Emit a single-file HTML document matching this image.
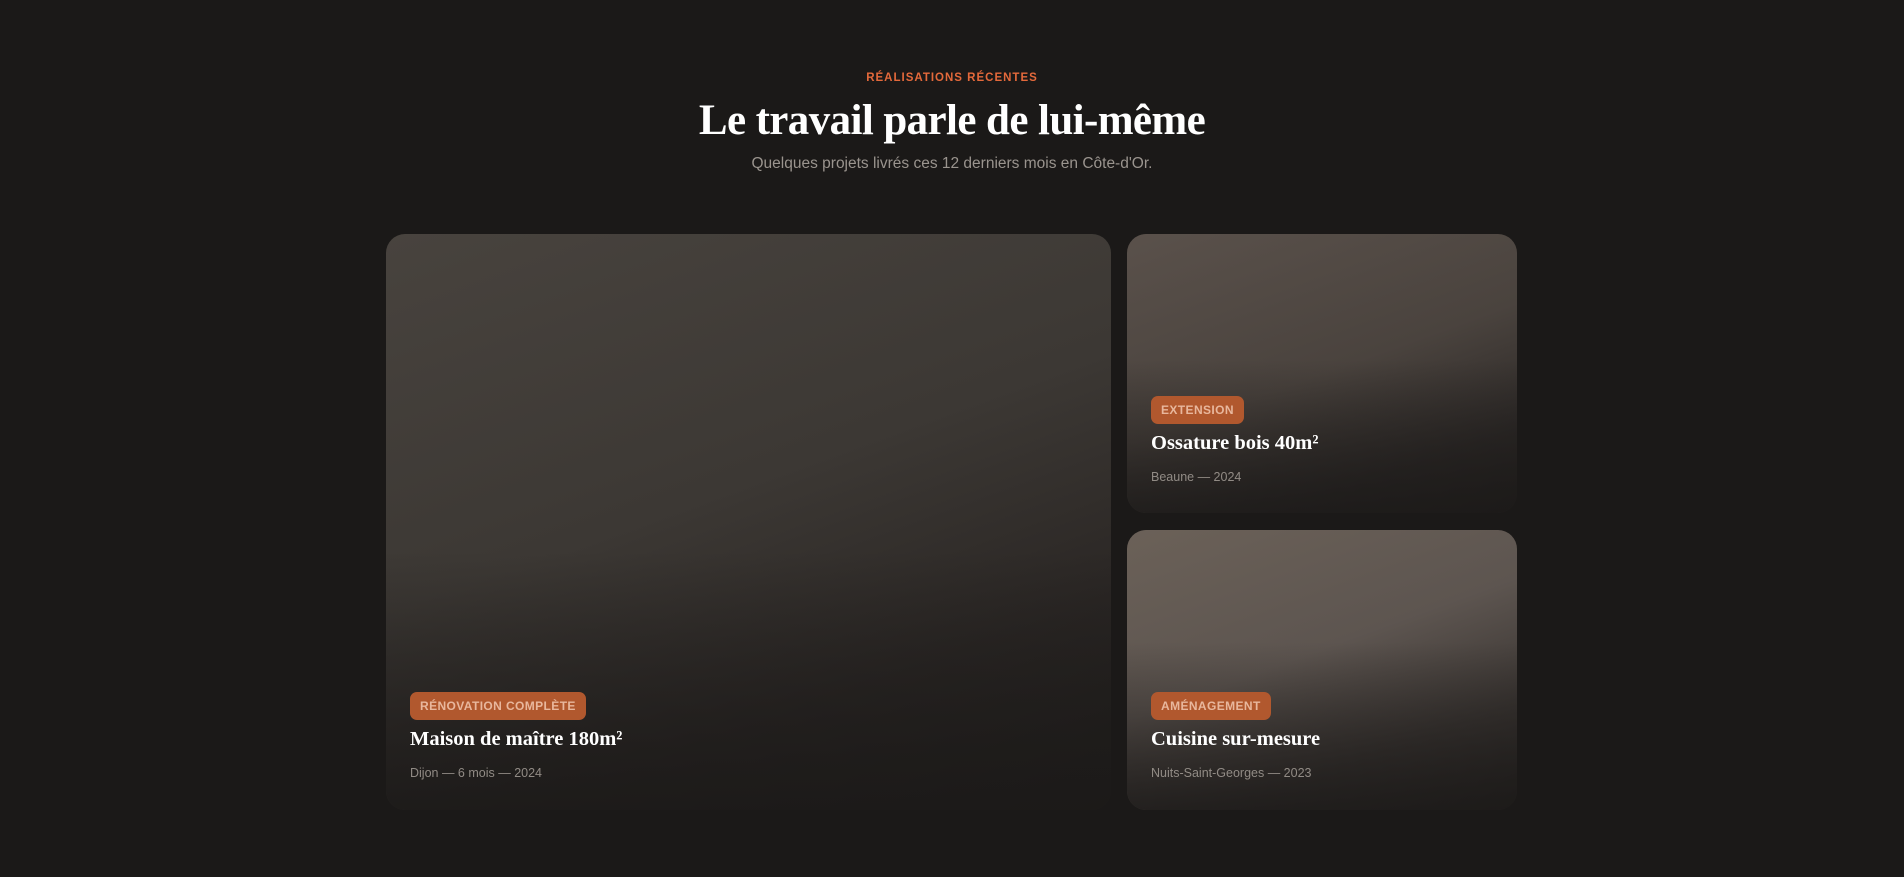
<!DOCTYPE html>
<html><head><meta charset="utf-8"><style>
*{margin:0;padding:0;box-sizing:border-box}
html,body{width:1904px;height:877px;background:#1b1918;overflow:hidden}
body{position:relative;font-family:"Liberation Sans",sans-serif}
.eyebrow{position:absolute;top:72px;left:0;width:1904px;text-align:center;color:#e4693b;font-size:11.5px;font-weight:bold;letter-spacing:1px}
h1{position:absolute;top:96px;left:0;width:1904px;text-align:center;color:#fff;font-family:"Liberation Serif",serif;font-size:43px;font-weight:bold;letter-spacing:-0.6px}
.sub{position:absolute;top:155px;left:0;width:1904px;text-align:center;color:#9a948e;font-size:15.5px}
.card{position:absolute;border-radius:19px;overflow:hidden}
.card .ov{position:absolute;inset:0;background:linear-gradient(180deg,rgba(27,25,24,0) 55%,rgba(27,25,24,.85) 100%)}
.badge{position:absolute;height:28px;padding:0 10px;border-radius:7px;background:#b1582e;color:#e8b79d;font-size:12px;font-weight:bold;line-height:28px;letter-spacing:.4px}
.t{position:absolute;color:#fff;font-family:"Liberation Serif",serif;font-weight:bold;font-size:20.5px}
.m{position:absolute;color:#918b85;font-size:12.5px}
</style></head><body>
<div class="eyebrow">RÉALISATIONS RÉCENTES</div>
<h1>Le travail parle de lui-même</h1>
<div class="sub">Quelques projets livrés ces 12 derniers mois en Côte-d'Or.</div>

<div class="card" style="left:386px;top:234px;width:725px;height:576px;background:linear-gradient(160deg,#48433e 0%,#3c3834 45%,#2a2624 75%,#1f1d1b 100%)"><div class="ov"></div>
<div class="badge" style="left:24px;top:458px">RÉNOVATION COMPLÈTE</div>
<div class="t" style="left:24px;top:494px">Maison de maître 180m²</div>
<div class="m" style="left:24px;top:532px">Dijon — 6 mois — 2024</div>
</div>

<div class="card" style="left:1127px;top:234px;width:390px;height:279px;background:linear-gradient(160deg,#5a514b 0%,#4a433e 50%,#2d2927 80%,#221f1d 100%)"><div class="ov" style="background:linear-gradient(180deg,rgba(27,25,24,0) 45%,rgba(27,25,24,.8) 100%)"></div>
<div class="badge" style="left:24px;top:162px">EXTENSION</div>
<div class="t" style="left:24px;top:198px">Ossature bois 40m²</div>
<div class="m" style="left:24px;top:236px">Beaune — 2024</div>
</div>

<div class="card" style="left:1127px;top:530px;width:390px;height:280px;background:linear-gradient(160deg,#6b6158 0%,#5d5550 45%,#3a3532 75%,#252220 100%)"><div class="ov" style="background:linear-gradient(180deg,rgba(27,25,24,0) 40%,rgba(27,25,24,.8) 100%)"></div>
<div class="badge" style="left:24px;top:162px">AMÉNAGEMENT</div>
<div class="t" style="left:24px;top:198px">Cuisine sur-mesure</div>
<div class="m" style="left:24px;top:236px">Nuits-Saint-Georges — 2023</div>
</div>
</body></html>
